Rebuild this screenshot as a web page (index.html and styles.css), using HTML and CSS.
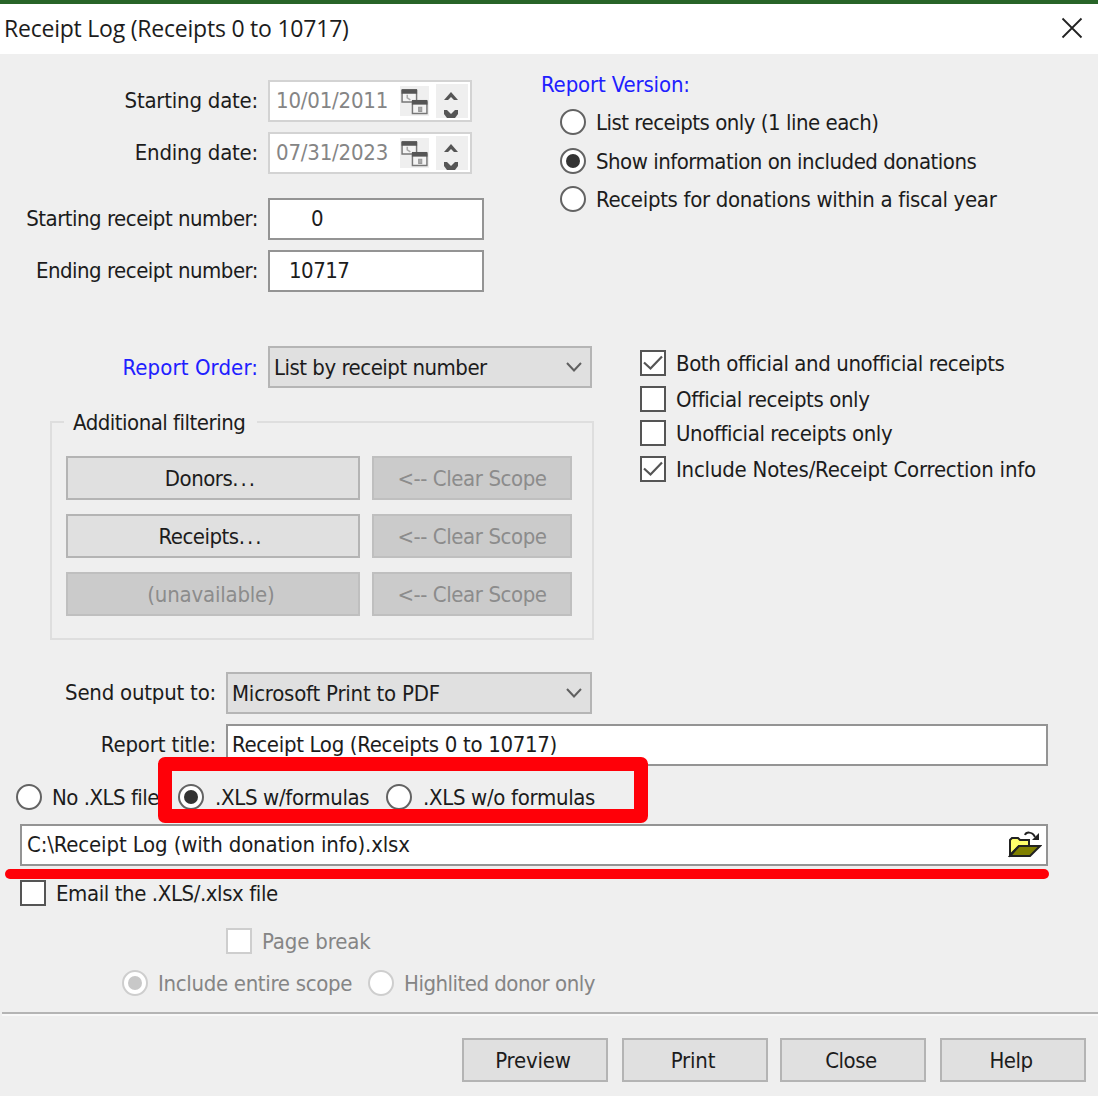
FILE: index.html
```html
<!DOCTYPE html>
<html lang="en">
<head>
<meta charset="utf-8">
<title>Receipt Log</title>
<link rel="stylesheet" href="styles.css">
</head>
<body>
<svg class="defs" aria-hidden="true">
  <symbol id="calendar" viewBox="0 0 28 28">
    <path d="M2 4h14v11H2z" fill="#f4f4f4" stroke="#777" stroke-width="1.4"/>
    <path d="M1.500 2.500h15V7h-15z" fill="#555"/>
    <path d="M7 8v3l3 2" fill="none" stroke="#aaa" stroke-width="1.500"/>
    <path d="M12 15h14v11H12z" fill="#f4f4f4" stroke="#777" stroke-width="1.4"/>
    <path d="M11.500 13h15v4.500h-15z" fill="#555"/>
    <path d="M18 20h3v4h-3z" fill="#aaa" stroke="#999"/>
  </symbol>
  <symbol id="spin" viewBox="0 0 32 34">
    <path d="M8 16l7-8 7 8h-4l-3-3-3 3z" fill="#555"/>
    <path d="M8 26h3l4 4 4-4h3v4l-3 4h-8l-3-4z" fill="#555"/>
  </symbol>
  <symbol id="chevron" viewBox="0 0 18 12"><path d="M2 2l7 7.500L16 2" fill="none" stroke="#606060" stroke-width="2"/></symbol>
  <symbol id="tick" viewBox="0 0 26 26"><path d="M4 12.500l6.500 6L22 6.500" fill="none" stroke="#555" stroke-width="2.200"/></symbol>
</svg>

<header class="titlebar">
  <h1>Receipt Log (Receipts 0 to 10717)</h1>
  <svg class="close" viewBox="0 0 22 22"><path d="M1.500 1.500l19 19M20.500 1.500l-19 19" fill="none" stroke="#222" stroke-width="1.800"/></svg>
</header>

<main>
  <section class="top">
    <div class="ranges">
      <div class="row"><span class="label loose">Starting date:</span><div class="date"><span>10/01/2011</span><svg class="cal"><use href="#calendar"/></svg><svg class="spin"><use href="#spin"/></svg></div></div>
      <div class="row"><span class="label loose">Ending date:</span><div class="date"><span>07/31/2023</span><svg class="cal"><use href="#calendar"/></svg><svg class="spin"><use href="#spin"/></svg></div></div>
      <div class="row number"><span class="label">Starting receipt number:</span><div class="input zero"><span>0</span></div></div>
      <div class="row"><span class="label">Ending receipt number:</span><div class="input last"><span>10717</span></div></div>
    </div>
    <div class="version">
      <div class="heading">Report Version:</div>
      <div class="choice"><i class="radio"></i><span>List receipts only (1 line each)</span></div>
      <div class="choice v2"><i class="radio on"></i><span>Show information on included donations</span></div>
      <div class="choice"><i class="radio"></i><span class="open">Receipts for donations within a fiscal year</span></div>
    </div>
  </section>

  <section class="middle">
    <div class="order">
      <div class="row"><span class="label blue">Report Order:</span><div class="combo"><span>List by receipt number</span><svg class="chev"><use href="#chevron"/></svg></div></div>
      <div class="group">
        <div class="legend"><span>Additional filtering</span></div>
        <div class="filters">
          <div class="btn">Donors<span class="dots">...</span></div><div class="btn off">&lt;-- Clear Scope</div>
          <div class="btn">Receipts<span class="dots">...</span></div><div class="btn off">&lt;-- Clear Scope</div>
          <div class="btn off wider">(unavailable)</div><div class="btn off">&lt;-- Clear Scope</div>
        </div>
      </div>
    </div>
    <div class="checks">
      <div class="choice"><i class="box"><svg><use href="#tick"/></svg></i><span class="c1">Both official and unofficial receipts</span></div>
      <div class="choice c2"><i class="box"></i><span class="c1">Official receipts only</span></div>
      <div class="choice"><i class="box"></i><span class="c1">Unofficial receipts only</span></div>
      <div class="choice"><i class="box"><svg><use href="#tick"/></svg></i><span class="loose">Include Notes/Receipt Correction info</span></div>
    </div>
  </section>

  <section class="output">
    <div class="row"><span class="label loose">Send output to:</span><div class="combo"><span class="loose">Microsoft Print to PDF</span><svg class="chev"><use href="#chevron"/></svg></div></div>
    <div class="row"><span class="label looser">Report title:</span><div class="input wide"><span class="open">Receipt Log (Receipts 0 to 10717)</span></div></div>
    <div class="formats">
      <div class="choice f1"><i class="radio"></i><span>No .XLS file</span></div>
      <div class="choice f2"><i class="radio on"></i><span class="open">.XLS w/formulas</span></div>
      <div class="choice f3"><i class="radio"></i><span class="open">.XLS w/o formulas</span></div>
      <div class="mark-box"></div>
    </div>
    <div class="input path"><span class="looser">C:\Receipt Log (with donation info).xlsx</span>
      <svg class="folder" viewBox="0 0 34 30">
        <path d="M2 25V10l2-2h6l2 2h9v6H11z" fill="#ffff6b" stroke="#222" stroke-width="2"/>
        <path d="M2 26l9-10h21l-10 10z" fill="#808000" stroke="#222" stroke-width="2"/>
        <path d="M17 5c1-3 7-4 10 2" fill="none" stroke="#222" stroke-width="2"/>
        <path d="M31 3v7h-7z" fill="#222"/>
      </svg>
      <div class="mark-line"></div>
    </div>
    <div class="choice email"><i class="box"></i><span class="c1">Email the .XLS/.xlsx file</span></div>
    <div class="choice page dim"><i class="box"></i><span class="looser">Page break</span></div>
    <div class="scope dim">
      <div class="choice s1"><i class="radio on"></i><span class="open">Include entire scope</span></div>
      <div class="choice s2"><i class="radio"></i><span>Highlited donor only</span></div>
    </div>
  </section>
</main>

<footer>
  <div class="btn wider">Preview</div><div class="btn wider print">Print</div><div class="btn">Close</div><div class="btn">Help</div>
</footer>
</body>
</html>
```
FILE: styles.css
```css
* { box-sizing: border-box; }
body {
  margin: 0; width: 1098px; height: 1096px; overflow: hidden;
  display: flex; flex-direction: column;
  background: #efefef; color: #1c1c1c;
  font: 22px/26px "DejaVu Sans Condensed", "DejaVu Sans", sans-serif;
  font-stretch: condensed; letter-spacing: -0.5px; white-space: nowrap;
}
.defs { display: none; }
svg { display: block; flex: none; }
span { display: block; }

/* Tracking steps */
.c1 { letter-spacing: -0.41px; }
.open { letter-spacing: -0.32px; }
.loose { letter-spacing: -0.22px; }
.looser { letter-spacing: -0.15px; }

.titlebar {
  height: 54px; flex: none; display: flex; align-items: center; justify-content: space-between;
  padding: 0 15px 2px 4px; background: #fff; border-top: 4px solid #286428;
}
h1 { margin: 0; font: 23px/30px "Open Sans", sans-serif; letter-spacing: -0.22px; }
.close { width: 22px; height: 22px; }

main { height: 958px; flex: none; }
.row { display: flex; align-items: center; gap: 10px; height: 42px; }
.label { width: 258px; text-align: right; flex: none; }
.blue, .heading { color: #2020ff; }
.blue { letter-spacing: 0.1px; }
.heading { letter-spacing: -0.15px; }

.top { display: flex; height: 292px; padding-top: 26px; }
.ranges { width: 541px; display: flex; flex-direction: column; gap: 10px; }
.number { margin-top: 14px; }
.date {
  width: 204px; height: 42px; display: flex; align-items: center;
  background: #fff; border: 2px solid #d3d3d3; color: #858585;
}
.date span { width: 113px; margin-left: 6px; letter-spacing: -0.2px; }
.cal { width: 29px; height: 30px; margin-left: 11px; background: #efefef; }
.spin { width: 32px; height: 34px; margin-left: 7px; background: #efefef; }
.input {
  width: 216px; height: 42px; display: flex; align-items: center;
  background: #fff; border: 2px solid #949494;
}
.zero { padding-left: 41px; }
.last { padding-left: 19px; }

.version { padding-top: 4px; }
.version .heading { height: 25px; line-height: 1px; }
.choice { display: flex; align-items: center; height: 26px; gap: 10px; }
.choice span { padding-top: 2px; }
.version .choice { margin: 0 0 13px 19px; }
.version .v2 { margin-bottom: 12px; }
.radio {
  width: 26px; height: 26px; flex: none; display: grid; place-items: center;
  border: 2px solid #636363; border-radius: 50%; background: #fff;
}
.radio.on::after { content: ""; width: 14px; height: 14px; border-radius: 50%; background: #333; }
.box { width: 26px; height: 26px; flex: none; border: 2px solid #555; background: #fff; }
.box svg { width: 26px; height: 26px; margin: -2px; }

.middle { display: flex; height: 326px; }
.middle .label { padding-top: 2px; }
.order { width: 640px; }
.combo {
  width: 324px; height: 42px; display: flex; align-items: center; justify-content: space-between;
  padding: 0 7px 0 4px; background: #e0e0e0; border: 2px solid #b5b5b5;
}
.combo span { padding-top: 2px; }
.chev { width: 18px; height: 12px; }
.group { width: 544px; height: 219px; margin: 33px 0 0 50px; border: 2px solid #dedede; }
.legend { height: 26px; margin: -13px 0 20px 12px; }
.legend span { width: 193px; padding-left: 9px; background: #efefef; }
.filters { display: grid; grid-template-columns: 294px 200px; grid-auto-rows: 44px; gap: 14px 12px; padding-left: 14px; }
.btn {
  display: flex; align-items: center; justify-content: center; padding: 1px 4px 0 0;
  background: #e0e0e0; border: 2px solid #b4b4b4;
}
.dots { letter-spacing: 2px; }
.wider { letter-spacing: -0.2px; }
.off { background: #cbcbcb; border-color: #bfbfbf; color: #8c8c8c; }
.off:nth-child(even) { padding-right: 0; letter-spacing: -0.42px; }
.checks { padding-top: 4px; }
.checks .choice { margin-bottom: 10px; }
.checks .c2 { margin-bottom: 8px; }

.output .label { width: 216px; }
.output .combo { width: 366px; }
.output .row { margin-bottom: 10px; }
.output .wide { width: 822px; padding-left: 4px; }
.formats { position: relative; display: flex; height: 26px; margin: 18px 0 14px 16px; }
.f1 { width: 162px; }
.f2 { width: 208px; }
.f2, .f3 { gap: 11px; }
.mark-box {
  position: absolute; left: 142px; top: -27px; width: 490px; height: 66px;
  border: 14px solid #ff0008; border-radius: 7px;
}
.path { position: relative; width: 1028px; margin-left: 20px; padding: 0 4px 0 5px; justify-content: space-between; }
.folder { width: 34px; height: 30px; }
.mark-line { position: absolute; left: -17px; top: 43px; width: 1044px; height: 10px; border-radius: 5px; background: #ff0008; }
.email { margin: 14px 0 22px 20px; }
.page { margin: 0 0 16px 226px; }
.scope { display: flex; margin-left: 122px; }
.s1 { width: 246px; }
.dim { color: #858585; }
.dim .radio, .dim .box { border-color: #cecece; }
.dim .radio.on::after { background: #c8c8c8; }

footer {
  flex: 1; display: flex; gap: 14px; padding: 24px 12px 14px 0; justify-content: flex-end;
  margin-left: 2px; border-top: 2px solid #b4b4b4; box-shadow: inset 0 2px #f8f8f8;
}
footer .btn { width: 146px; }
footer .print { margin-right: -2px; }
```
